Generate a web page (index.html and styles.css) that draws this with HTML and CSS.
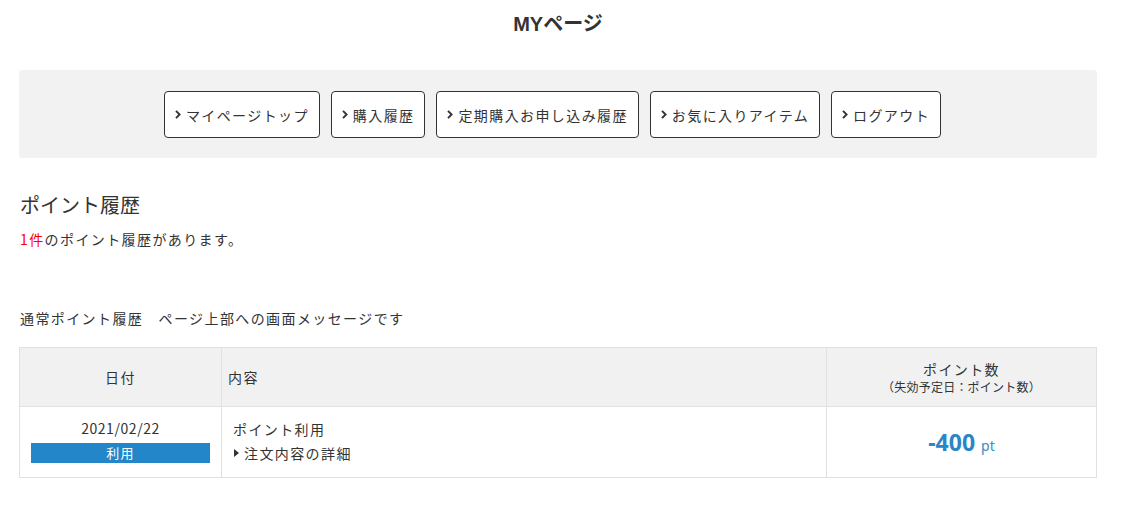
FILE: index.html
```html
<!DOCTYPE html>
<html lang="ja">
<head>
<meta charset="utf-8">
<title>MYページ</title>
<link rel="stylesheet" href="styles.css">
</head>
<body>
<div class="page">
  <h1 class="page-title">MYページ</h1>

  <nav class="mypage-nav">
    <a class="nav-btn" href="#"><svg class="chev" viewBox="0 0 6 9" width="6" height="9"><path d="M1 0.8 L4.6 4.5 L1 8.2" fill="none" stroke="#333" stroke-width="1.9"/></svg>マイページトップ</a>
    <a class="nav-btn" href="#"><svg class="chev" viewBox="0 0 6 9" width="6" height="9"><path d="M1 0.8 L4.6 4.5 L1 8.2" fill="none" stroke="#333" stroke-width="1.9"/></svg>購入履歴</a>
    <a class="nav-btn" href="#"><svg class="chev" viewBox="0 0 6 9" width="6" height="9"><path d="M1 0.8 L4.6 4.5 L1 8.2" fill="none" stroke="#333" stroke-width="1.9"/></svg>定期購入お申し込み履歴</a>
    <a class="nav-btn" href="#"><svg class="chev" viewBox="0 0 6 9" width="6" height="9"><path d="M1 0.8 L4.6 4.5 L1 8.2" fill="none" stroke="#333" stroke-width="1.9"/></svg>お気に入りアイテム</a>
    <a class="nav-btn" href="#"><svg class="chev" viewBox="0 0 6 9" width="6" height="9"><path d="M1 0.8 L4.6 4.5 L1 8.2" fill="none" stroke="#333" stroke-width="1.9"/></svg>ログアウト</a>
  </nav>

  <h2 class="section-title">ポイント履歴</h2>
  <p class="count-text"><span class="count-num">1件</span>のポイント履歴があります。</p>

  <p class="message">通常ポイント履歴　ページ上部への画面メッセージです</p>

  <table class="point-table">
    <colgroup>
      <col class="col-date">
      <col class="col-content">
      <col class="col-point">
    </colgroup>
    <thead>
      <tr>
        <th class="th-date">日付</th>
        <th class="th-content">内容</th>
        <th class="th-point">ポイント数<span class="th-sub">（失効予定日：ポイント数）</span></th>
      </tr>
    </thead>
    <tbody>
      <tr>
        <td class="td-date">
          <div class="date">2021/02/22</div>
          <div class="badge">利用</div>
        </td>
        <td class="td-content">
          <div class="content-line">ポイント利用</div>
          <div class="content-line detail"><span class="tri"></span>注文内容の詳細</div>
        </td>
        <td class="td-point"><span class="pt-num">-400</span><span class="pt-unit">pt</span></td>
      </tr>
    </tbody>
  </table>
</div>
</body>
</html>
```

FILE: styles.css
```css
* {
  box-sizing: border-box;
}

body {
  margin: 0;
  background: #fff;
  color: #333;
  font-family: "Noto Sans CJK JP", "Noto Sans", sans-serif;
  font-size: 14px;
}

.page {
  padding: 0 31px 0 19px;
}

.page-title {
  margin: 0 0 32px;
  padding-top: 10px;
  font-family: "Liberation Sans", "Noto Sans CJK JP", sans-serif;
  font-size: 20px;
  font-weight: bold;
  line-height: 28px;
  text-align: center;
  color: #333;
}

.mypage-nav {
  display: flex;
  justify-content: center;
  background: #f2f2f2;
  border-radius: 3px;
  padding: 21px 0 20px;
}

.nav-btn {
  display: flex;
  align-items: center;
  height: 47px;
  padding: 0 10px;
  margin-right: 11px;
  background: #fff;
  border: 1px solid #333;
  border-radius: 4px;
  color: #333;
  text-decoration: none;
  font-size: 14px;
  letter-spacing: 0.1em;
  line-height: 20px;
  white-space: nowrap;
}

.chev {
  display: block;
  flex: none;
  margin-right: 5px;
}

.section-title {
  margin: 33px 0 9px 1px;
  font-size: 20px;
  font-weight: normal;
  line-height: 28px;
  color: #333;
}

.count-text {
  margin: 0 0 0 1px;
  font-size: 14px;
  line-height: 22px;
  letter-spacing: 0.1em;
}

.count-num {
  color: #ff0000;
}

.message {
  margin: 57px 0 18px 1px;
  font-size: 14px;
  line-height: 22px;
  letter-spacing: 0.1em;
}

.point-table {
  width: 100%;
  border-collapse: collapse;
  table-layout: fixed;
  border: 1px solid #e1e1e1;
}

.col-date {
  width: 202px;
}

.col-point {
  width: 270px;
}

.point-table th,
.point-table td {
  border: 1px solid #e1e1e1;
  font-weight: normal;
  letter-spacing: 0.1em;
}

.point-table th {
  height: 59px;
  vertical-align: middle;
  background: #f1f1f1;
  font-size: 14px;
  line-height: 18px;
}

.th-date {
  text-align: center;
}

.th-content {
  text-align: left;
  padding-left: 6px;
}

.th-point {
  text-align: center;
}

.th-sub {
  display: block;
  font-size: 12px;
  line-height: 17px;
  letter-spacing: 0.02em;
}

.point-table td {
  height: 71px;
}

.td-date {
  vertical-align: top;
  padding: 11px 11px 0;
  text-align: center;
}

.date {
  font-size: 14px;
  line-height: 20px;
  letter-spacing: 0.04em;
}

.badge {
  margin-top: 5px;
  height: 20px;
  line-height: 20px;
  background: #2386c8;
  color: #fff;
  font-size: 13px;
  letter-spacing: 0.1em;
  text-align: center;
}

.td-content {
  vertical-align: top;
  padding: 10px 11px 0;
}

.content-line {
  font-size: 14px;
  line-height: 24px;
}

.detail {
  display: flex;
  align-items: center;
}

.tri {
  display: block;
  width: 0;
  height: 0;
  border-top: 4px solid transparent;
  border-bottom: 4px solid transparent;
  border-left: 5px solid #333;
  margin: 0 5px 0 1px;
}

.td-point {
  vertical-align: middle;
  text-align: center;
}

.pt-num {
  font-family: "Noto Sans", "Liberation Sans", sans-serif;
  font-size: 23px;
  font-weight: bold;
  color: #2a86c6;
  letter-spacing: 0;
}

.pt-unit {
  margin-left: 6px;
  font-family: "Noto Sans", "Liberation Sans", sans-serif;
  font-size: 14px;
  color: #3b8bc4;
  letter-spacing: 0;
}
```
